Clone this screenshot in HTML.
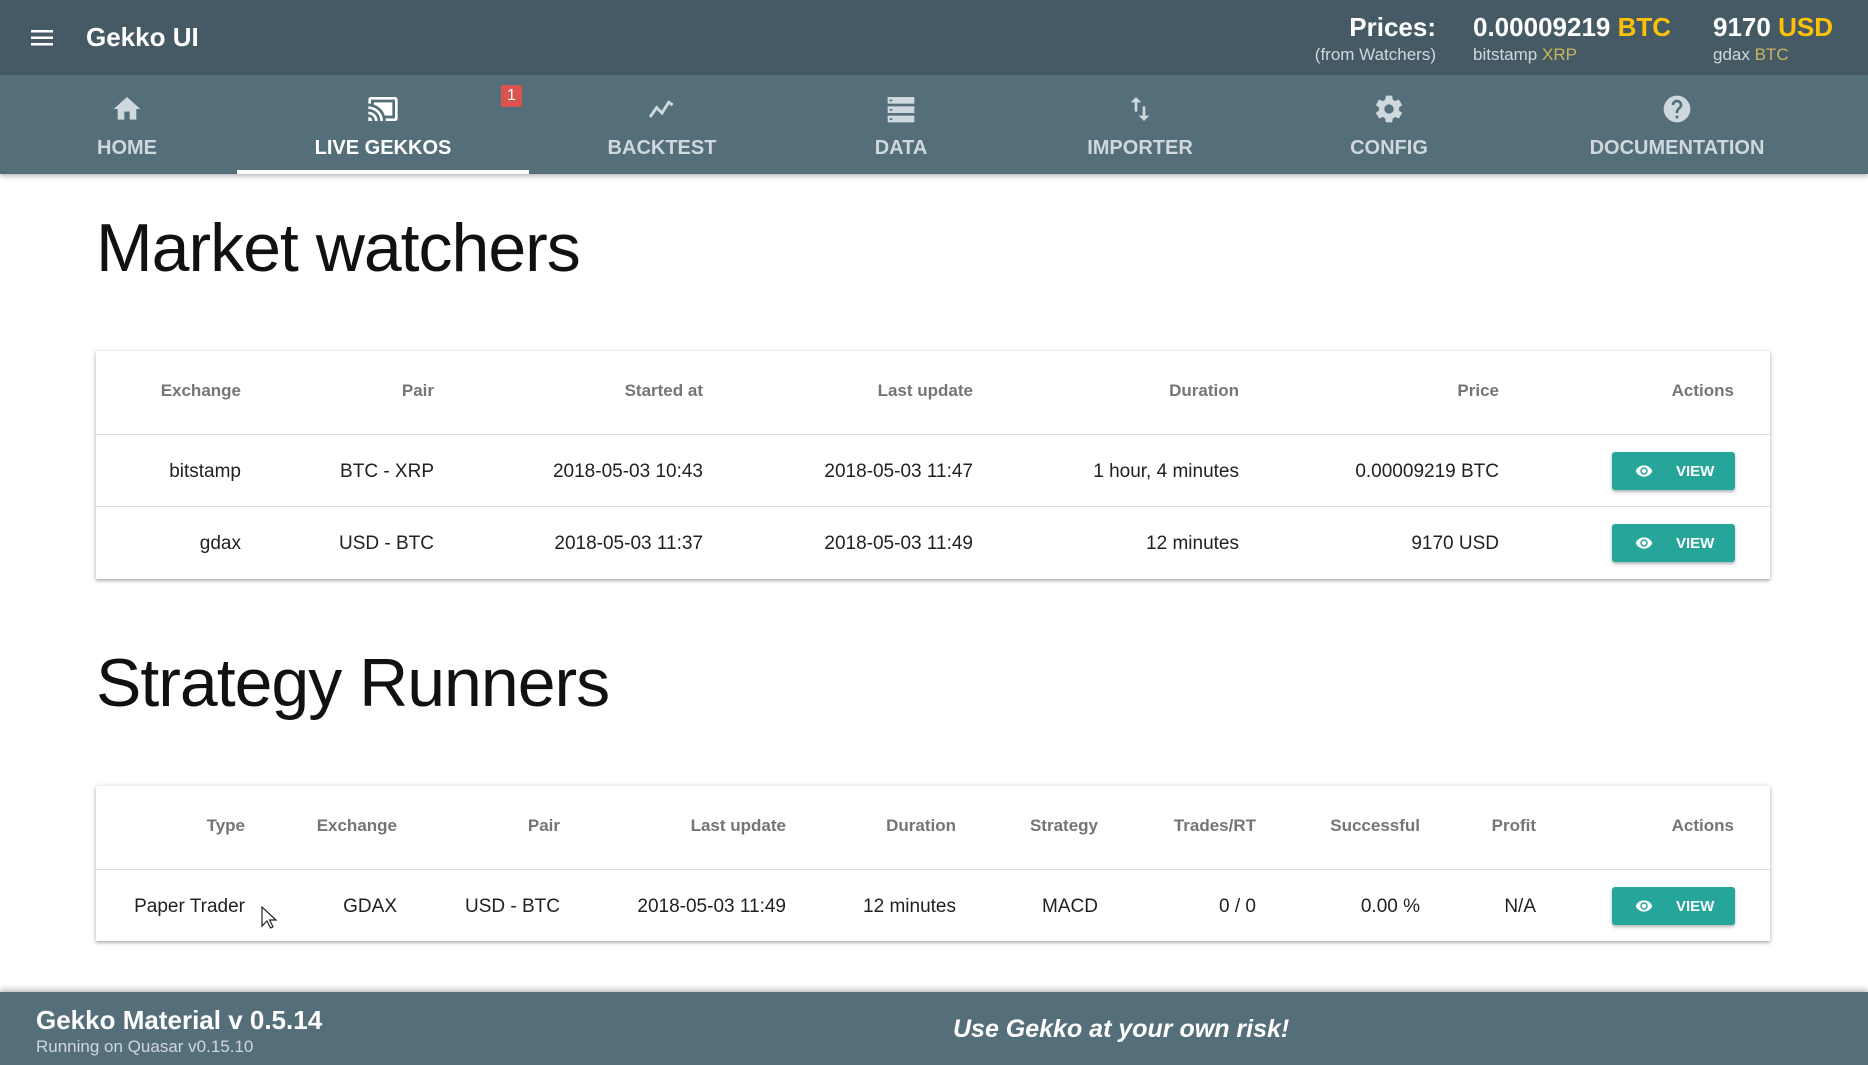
<!DOCTYPE html>
<html><head><meta charset="utf-8"><style>
*{margin:0;padding:0;box-sizing:border-box}
body{width:1868px;height:1065px;overflow:hidden;background:#fff;font-family:"Liberation Sans",sans-serif;position:relative}
.abs{position:absolute}
#top{left:0;top:0;width:1868px;height:75px;background:#455a64}
#nav{left:0;top:75px;width:1868px;height:99px;background:#546e7a;box-shadow:0 2px 5px rgba(0,0,0,.3)}
.ni{position:absolute;top:0;height:99px;text-align:center;transform:translateX(-50%);color:#cfd8dc;font-size:20px;font-weight:bold;white-space:nowrap}
.ni svg{position:absolute;left:50%;top:18px;margin-left:-16px}
.ni span{position:absolute;left:50%;transform:translateX(-50%);top:62px}
.ni.act{color:#fff}
.title{left:96px;font-size:68px;color:#111;letter-spacing:-1px}
.card{left:96px;width:1674px;background:#fff;box-shadow:0 1px 5px rgba(0,0,0,.25),0 2px 2px rgba(0,0,0,.14)}
.row{position:absolute;left:0;width:1674px;border-top:1px solid #ddd}
.c{position:absolute;white-space:nowrap;transform:translateX(-100%)}
.h .c{color:#757575;font-size:17px;font-weight:bold;top:30px}
.b .c{color:#212121;font-size:19px;top:26px}
.btn{position:absolute;left:1516px;width:123px;height:38px;background:#26a69a;border-radius:3px;box-shadow:0 2px 3px rgba(0,0,0,.3);color:#fff;font-size:15px;font-weight:bold}
.btn svg{position:absolute;left:22px;top:10px}
.btn span{position:absolute;left:64px;top:11px}
#foot{left:0;top:992px;width:1868px;height:73px;background:#546e7a;box-shadow:0 -2px 6px rgba(0,0,0,.3)}
</style></head><body>
<div id="top" class="abs">
 <svg class="abs" style="left:31px;top:29px" width="24" height="18" viewBox="0 0 24 18"><rect y="1" width="22" height="2.5" fill="#fff"/><rect y="7.5" width="22" height="2.5" fill="#fff"/><rect y="14" width="22" height="2.5" fill="#fff"/></svg>
 <div class="abs" style="left:86px;top:22px;color:#fff;font-size:26px;font-weight:bold">Gekko UI</div>
 <div class="abs" style="right:432px;top:12px;color:#fff;font-size:26px;font-weight:bold">Prices:</div>
 <div class="abs" style="right:432px;top:45px;color:#cfd8dc;font-size:17px">(from Watchers)</div>
 <div class="abs" style="left:1473px;top:12px;color:#fff;font-size:26px;font-weight:bold">0.00009219 <span style="color:#ffc107">BTC</span></div>
 <div class="abs" style="left:1473px;top:45px;color:#cfd8dc;font-size:17px">bitstamp <span style="color:#c9b560">XRP</span></div>
 <div class="abs" style="left:1713px;top:12px;color:#fff;font-size:26px;font-weight:bold">9170 <span style="color:#ffc107">USD</span></div>
 <div class="abs" style="left:1713px;top:45px;color:#cfd8dc;font-size:17px">gdax <span style="color:#c9b560">BTC</span></div>
</div>
<div id="nav" class="abs">
 <div class="ni" style="left:127px"><svg width="32" height="32" viewBox="0 0 24 24"><path d="M10 20v-6h4v6h5v-8h3L12 3 2 12h3v8z" fill="#cfd8dc"/></svg><span>HOME</span></div>
 <div class="ni act" style="left:383px;width:292px"><svg width="32" height="32" viewBox="0 0 24 24"><path d="M21 3H3c-1.1 0-2 .9-2 2v3h2V5h18v14h-7v2h7c1.1 0 2-.9 2-2V5c0-1.1-.9-2-2-2zM1 18v3h3c0-1.660-1.34-3-3-3zm0-4v2c2.76 0 5 2.24 5 5h2c0-3.870-3.130-7-7-7zm18-7H5v1.63c3.96 1.28 7.09 4.41 8.37 8.37H19V7zM1 10v2c4.97 0 9 4.03 9 9h2c0-6.08-4.93-11-11-11z" fill="#fff"/></svg><span>LIVE GEKKOS</span>
  <div style="position:absolute;left:264px;top:10px;width:21px;height:22px;background:#d9534f;border-radius:2px;color:#fff;font-size:16px;line-height:22px;font-weight:normal">1</div>
  <div style="position:absolute;left:0;bottom:0;width:292px;height:4px;background:#fff"></div></div>
 <div class="ni" style="left:662px"><svg width="32" height="32" viewBox="0 0 24 24"><path d="M3 18l5-7 4 4 5-8 3 2" fill="none" stroke="#cfd8dc" stroke-width="2.2"/></svg><span>BACKTEST</span></div>
 <div class="ni" style="left:901px"><svg width="32" height="32" viewBox="0 0 24 24"><rect x="2" y="3" width="20" height="5" fill="#cfd8dc"/><rect x="2" y="10" width="20" height="5" fill="#cfd8dc"/><rect x="2" y="17" width="20" height="5" fill="#cfd8dc"/><rect x="3.5" y="5" width="2" height="1.2" fill="#546e7a"/><rect x="3.5" y="12" width="2" height="1.2" fill="#546e7a"/><rect x="3.5" y="19" width="2" height="1.2" fill="#546e7a"/></svg><span>DATA</span></div>
 <div class="ni" style="left:1140px"><svg width="32" height="32" viewBox="0 0 24 24"><path d="M16 17.01V10h-2v7.01h-3L15 21l4-3.99h-3zM9 3L5 6.99h3V14h2V6.99h3L9 3z" fill="#cfd8dc"/></svg><span>IMPORTER</span></div>
 <div class="ni" style="left:1389px"><svg width="32" height="32" viewBox="0 0 24 24"><path d="M19.4 13c.04-.32.06-.66.06-1s-.02-.68-.06-1l2.1-1.65c.2-.15.25-.42.12-.64l-2-3.46c-.12-.22-.39-.3-.61-.22l-2.49 1c-.52-.4-1.08-.73-1.690-.98l-.38-2.65A.49.49 0 0 0 14 2h-4c-.25 0-.46.18-.49.42l-.38 2.65c-.61.25-1.17.59-1.69.98l-2.49-1a.5.5 0 0 0-.61.22l-2 3.46c-.13.22-.07.49.12.64L4.57 11c-.04.32-.07.65-.07 1s.03.68.07 1l-2.11 1.65c-.19.15-.24.42-.12.64l2 3.46c.12.22.39.3.61.22l2.49-1c.52.4 1.08.73 1.69.98l.38 2.65c.03.24.24.42.49.42h4c.25 0 .46-.18.49-.42l.38-2.65c.61-.25 1.17-.59 1.69-.98l2.49 1c.23.09.49 0 .61-.22l2-3.46c.12-.22.07-.49-.12-.64L19.4 13zM12 15.5a3.5 3.5 0 1 1 0-7 3.5 3.5 0 0 1 0 7z" fill="#cfd8dc"/></svg><span>CONFIG</span></div>
 <div class="ni" style="left:1677px"><svg width="32" height="32" viewBox="0 0 24 24"><path d="M12 2a10 10 0 1 0 0 20 10 10 0 0 0 0-20zm1 17h-2v-2h2v2zm2.07-7.75l-.9.92C13.45 12.9 13 13.5 13 15h-2v-.5c0-1.1.45-2.1 1.17-2.83l1.24-1.26c.37-.36.59-.86.59-1.41 0-1.1-.9-2-2-2s-2 .9-2 2H8a4 4 0 0 1 8 0c0 .88-.36 1.68-.93 2.25z" fill="#cfd8dc"/></svg><span>DOCUMENTATION</span></div>
</div>

<div class="abs title" style="top:209px">Market watchers</div>
<div class="abs card" style="top:351px;height:228px">
 <div class="row h" style="top:0;height:83px;border-top:none">
  <div class="c" style="left:145px">Exchange</div><div class="c" style="left:338px">Pair</div><div class="c" style="left:607px">Started at</div><div class="c" style="left:877px">Last update</div><div class="c" style="left:1143px">Duration</div><div class="c" style="left:1403px">Price</div><div class="c" style="left:1638px">Actions</div>
 </div>
 <div class="row b" style="top:83px;height:72px">
  <div class="c" style="left:145px">bitstamp</div><div class="c" style="left:338px">BTC - XRP</div><div class="c" style="left:607px">2018-05-03 10:43</div><div class="c" style="left:877px">2018-05-03 11:47</div><div class="c" style="left:1143px">1 hour, 4 minutes</div><div class="c" style="left:1403px">0.00009219 BTC</div>
  <div class="btn" style="top:17px"><svg width="20" height="18" viewBox="0 0 24 24"><path d="M12 4.5C7 4.5 2.73 7.61 1 12c1.73 4.39 6 7.5 11 7.5s9.27-3.11 11-7.5c-1.73-4.39-6-7.5-11-7.5zM12 17a5 5 0 1 1 0-10 5 5 0 0 1 0 10zm0-8a3 3 0 1 0 0 6 3 3 0 0 0 0-6z" fill="#fff"/></svg><span>VIEW</span></div>
 </div>
 <div class="row b" style="top:155px;height:73px">
  <div class="c" style="left:145px">gdax</div><div class="c" style="left:338px">USD - BTC</div><div class="c" style="left:607px">2018-05-03 11:37</div><div class="c" style="left:877px">2018-05-03 11:49</div><div class="c" style="left:1143px">12 minutes</div><div class="c" style="left:1403px">9170 USD</div>
  <div class="btn" style="top:17px"><svg width="20" height="18" viewBox="0 0 24 24"><path d="M12 4.5C7 4.5 2.73 7.61 1 12c1.73 4.39 6 7.5 11 7.5s9.27-3.11 11-7.5c-1.73-4.39-6-7.5-11-7.5zM12 17a5 5 0 1 1 0-10 5 5 0 0 1 0 10zm0-8a3 3 0 1 0 0 6 3 3 0 0 0 0-6z" fill="#fff"/></svg><span>VIEW</span></div>
 </div>
</div>

<div class="abs title" style="top:644px">Strategy Runners</div>
<div class="abs card" style="top:786px;height:155px">
 <div class="row h" style="top:0;height:83px;border-top:none">
  <div class="c" style="left:149px">Type</div><div class="c" style="left:301px">Exchange</div><div class="c" style="left:464px">Pair</div><div class="c" style="left:690px">Last update</div><div class="c" style="left:860px">Duration</div><div class="c" style="left:1002px">Strategy</div><div class="c" style="left:1160px">Trades/RT</div><div class="c" style="left:1324px">Successful</div><div class="c" style="left:1440px">Profit</div><div class="c" style="left:1638px">Actions</div>
 </div>
 <div class="row b" style="top:83px;height:72px">
  <div class="c" style="left:149px">Paper Trader</div><div class="c" style="left:301px">GDAX</div><div class="c" style="left:464px">USD - BTC</div><div class="c" style="left:690px">2018-05-03 11:49</div><div class="c" style="left:860px">12 minutes</div><div class="c" style="left:1002px">MACD</div><div class="c" style="left:1160px">0 / 0</div><div class="c" style="left:1324px">0.00 %</div><div class="c" style="left:1440px">N/A</div>
  <div class="btn" style="top:17px"><svg width="20" height="18" viewBox="0 0 24 24"><path d="M12 4.5C7 4.5 2.73 7.61 1 12c1.73 4.39 6 7.5 11 7.5s9.27-3.11 11-7.5c-1.73-4.39-6-7.5-11-7.5zM12 17a5 5 0 1 1 0-10 5 5 0 0 1 0 10zm0-8a3 3 0 1 0 0 6 3 3 0 0 0 0-6z" fill="#fff"/></svg><span>VIEW</span></div>
  <svg style="position:absolute;left:165px;top:36px" width="16" height="24" viewBox="0 0 16 24"><path d="M1 1v19l5-5 3.5 7 2.5-1.2-3.4-6.8H15z" fill="#fff" stroke="#222" stroke-width="1.2"/></svg>
 </div>
</div>

<div id="foot" class="abs">
 <div class="abs" style="left:36px;top:13px;color:#fff;font-size:26px;font-weight:bold">Gekko Material v 0.5.14</div>
 <div class="abs" style="left:36px;top:45px;color:#cfd8dc;font-size:17px">Running on Quasar v0.15.10</div>
 <div class="abs" style="left:953px;top:23px;color:#fff;font-size:25px;font-weight:bold;font-style:italic">Use Gekko at your own risk!</div>
</div>
</body></html>
